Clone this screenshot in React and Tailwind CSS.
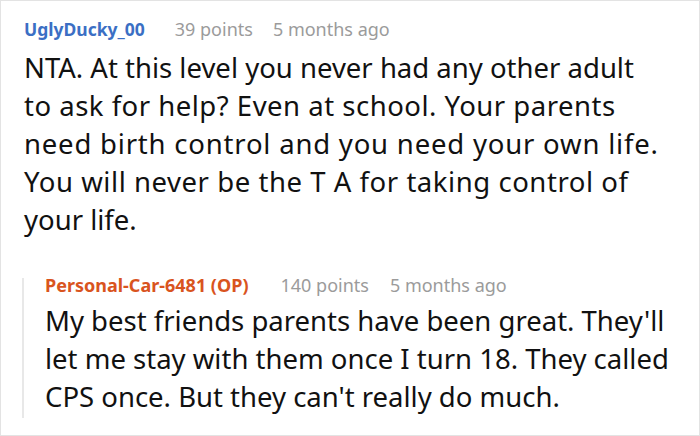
const TOP_LINES = [
  { text: 'NTA. At this level you never had any other adult', cls: '' },
  { text: 'to ask for help? Even at school. Your parents', cls: 'tracking-[0.5px]' },
  { text: 'need birth control and you need your own life.', cls: 'tracking-[0.8px]' },
  { text: 'You will never be the T A for taking control of', cls: 'tracking-[0.55px]' },
  { text: 'your life.', cls: '' },
];

const REPLY_LINES = [
  "My best friends parents have been great. They'll",
  'let me stay with them once I turn 18. They called',
  "CPS once. But they can't really do much.",
];

export default function App() {
  return (
    <div
      className="w-[700px] h-[436px] bg-white border border-[#e3e3e3] overflow-hidden"
      style={{ fontFamily: '"Noto Sans", "Open Sans", sans-serif' }}
    >
      <div className="pl-[23px] pt-[14px]">
        <div className="flex items-baseline text-[18px] leading-[28px] whitespace-nowrap">
          <span className="font-bold text-[17.5px] text-[#3b6fc4]">UglyDucky_00</span>
          <span className="ml-[30px] text-[#9b9b9b]">39 points</span>
          <span className="ml-[20px] text-[#9b9b9b]">5 months ago</span>
        </div>
        <div className="mt-[6px] text-[27.5px] leading-[38px] text-[#111]">
          {TOP_LINES.map((line) => (
            <div key={line.text} className={`whitespace-nowrap ${line.cls}`}>{line.text}</div>
          ))}
        </div>
      </div>

      <div className="ml-[21px] mt-[39px] border-l-2 border-[#e8e8e8] pl-[21px] pb-[2px]">
        <div className="flex items-baseline text-[18px] leading-[14px] whitespace-nowrap">
          <span className="font-bold text-[#d9541e]">Personal-Car-6481 (OP)</span>
          <span className="ml-[32px] text-[#9b9b9b]">140 points</span>
          <span className="ml-[21px] text-[#9b9b9b]">5 months ago</span>
        </div>
        <div className="mt-[10px] text-[27.5px] leading-[38px] text-[#111]">
          {REPLY_LINES.map((line) => (
            <div key={line} className="whitespace-nowrap">{line}</div>
          ))}
        </div>
      </div>
    </div>
  );
}
